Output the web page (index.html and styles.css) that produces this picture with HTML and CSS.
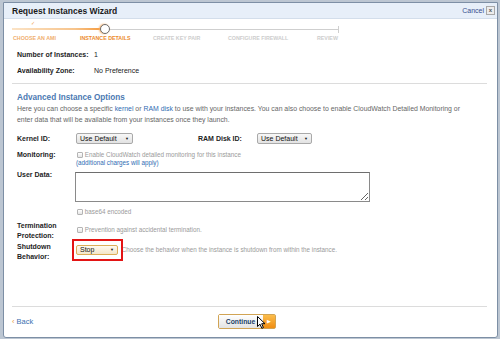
FILE: index.html
```html
<!DOCTYPE html>
<html lang="en">
<head>
    <meta charset="UTF-8">
    <title>Request Instances Wizard</title>
    <link rel="stylesheet" href="styles.css">
</head>
<body>
    <div class="dialog">
        <div class="titlebar">
            <span class="title">Request Instances Wizard</span>
            <span class="cancel">Cancel <span class="close">x</span></span>
        </div>

        <div class="steps">
            <div class="track">
                <div class="done-line"></div>
                <span class="check-mark">&#10003;</span>
                <span class="marker"></span>
                <span class="track-end"></span>
            </div>
            <div class="step-labels">
                <span class="step done">Choose an AMI</span>
                <span class="step current">Instance Details</span>
                <span class="step">Create Key Pair</span>
                <span class="step">Configure Firewall</span>
                <span class="step">Review</span>
            </div>
        </div>

        <div class="summary">
            <div class="label">Number of Instances:</div>
            <div>1</div>
            <div class="label">Availability Zone:</div>
            <div>No Preference</div>
        </div>

        <hr class="divider">

        <div class="advanced">
            <h2>Advanced Instance Options</h2>
            <p>Here you can choose a specific <a href="#">kernel</a> or <a href="#">RAM disk</a> to use with your instances. You can also choose to enable CloudWatch Detailed Monitoring or enter data that will be available from your instances once they launch.</p>

            <div class="field kernel">
                <div class="label">Kernel ID:</div>
                <div><span class="select kernel-select">Use Default <span class="arrow">&#9660;</span></span></div>
                <div class="label">RAM Disk ID:</div>
                <div><span class="select ram-select">Use Default <span class="arrow">&#9660;</span></span></div>
            </div>

            <div class="field monitoring">
                <div class="label">Monitoring:</div>
                <div class="value small">
                    <span class="box"></span> Enable CloudWatch detailed monitoring for this instance<br>
                    <a href="#">(additional charges will apply)</a>
                </div>
            </div>

            <div class="field userdata">
                <div class="label">User Data:</div>
                <div><textarea></textarea></div>
            </div>

            <div class="field base64">
                <div></div>
                <div class="value small"><span class="box"></span> base64 encoded</div>
            </div>

            <div class="field termination">
                <div class="label">Termination Protection:</div>
                <div class="value small"><span class="box"></span> Prevention against accidental termination.</div>
            </div>

            <div class="field shutdown">
                <div class="label">Shutdown Behavior:</div>
                <div class="value small">
                    <span class="highlight-wrap">
                        <span class="select stop-select">Stop <span class="arrow">&#9660;</span></span>
                        <span class="highlight"></span>
                    </span>
                    Choose the behavior when the instance is shutdown from within the instance.
                </div>
            </div>
        </div>

        <div class="footer">
            <a href="#" class="back"><span class="chev">&lsaquo;</span> Back</a>
            <span class="continue">
                <span class="continue-text">Continue</span><span class="continue-arrow">&#9654;</span>
                <svg class="cursor" width="9" height="13" viewBox="0 0 9 13">
                    <path d="M0.5 0.5 L0.5 10.5 L3 8.2 L4.8 12.3 L6.4 11.6 L4.7 7.7 L8 7.7 Z" fill="#fff" stroke="#000" stroke-width="1"/>
                </svg>
            </span>
            <span></span>
        </div>
    </div>
</body>
</html>
```

FILE: styles.css
```css
body {
    margin: 0;
    background-color: #bcc6d2;
    font-family: "Liberation Sans", Arial, sans-serif;
    font-size: 7px;
    color: #222;
}

a {
    color: #2f6cb3;
    text-decoration: none;
}

.dialog {
    margin: 2px 0 0 3px;
    width: 495px;
    height: 336px;
    box-sizing: border-box;
    border: 1px solid #7d8fa5;
    border-radius: 0 0 3px 3px;
    background-color: white;
    display: flex;
    flex-direction: column;
}

/* barra de titulo */
.titlebar {
    height: 16px;
    box-sizing: border-box;
    background-color: #e7eff9;
    border-bottom: 1px solid #d3deeb;
    display: flex;
    align-items: center;
    justify-content: space-between;
    padding: 0 2px 0 8px;
}

.title {
    font-size: 8.5px;
    font-weight: bold;
    color: #1b1b1b;
}

.cancel {
    color: #3a4e8e;
    font-size: 7px;
    display: flex;
    align-items: center;
    gap: 2px;
}

.close {
    display: inline-block;
    width: 9px;
    height: 9px;
    box-sizing: border-box;
    border: 1px solid #a8a8a8;
    background-color: #ececec;
    color: #555;
    font-size: 6px;
    font-weight: bold;
    line-height: 7px;
    text-align: center;
}

/* pasos del asistente */
.steps {
    padding: 5px 0 0 8px;
}

.track {
    position: relative;
    width: 327px;
    height: 10px;
}

.track::before {
    content: "";
    position: absolute;
    left: 0;
    right: 0;
    top: 5px;
    height: 1px;
    background-color: #cfcfcf;
}

.done-line {
    position: absolute;
    left: 0;
    top: 4px;
    width: 90px;
    height: 2px;
    background: linear-gradient(to right, #fbe3c6, #f7c48c 70%, #f59a3c);
}

.check-mark {
    position: absolute;
    left: 19px;
    top: -4px;
    font-size: 5px;
    color: #f0a050;
}

.marker {
    position: absolute;
    left: 88px;
    top: 0;
    width: 10px;
    height: 10px;
    box-sizing: border-box;
    border: 1px solid #6d6d6d;
    border-radius: 50%;
    background-color: white;
    box-shadow: -1px 0 2px #f7b06a;
}

.track-end {
    position: absolute;
    right: 0;
    top: 2px;
    width: 1px;
    height: 7px;
    background-color: #cfcfcf;
}

.step-labels {
    display: grid;
    grid-template-columns: 67px 73px 75px 89px auto;
    margin: 1px 0 0 1px;
}

.step {
    font-size: 5.3px;
    font-weight: bold;
    text-transform: uppercase;
    line-height: 6px;
    color: #cdcdcd;
    white-space: nowrap;
}

.step.done {
    color: #f0ae6e;
}

.step.current {
    color: #ec8a2c;
}

/* resumen */
.summary {
    display: grid;
    grid-template-columns: 77px 1fr;
    row-gap: 6px;
    line-height: 10px;
    margin-top: 9px;
    padding-left: 13px;
}

.label {
    font-weight: bold;
    color: #1e1e1e;
}

.divider {
    border: 0;
    border-top: 1px solid #dcdcdc;
    margin: 7px 10px 0 8px;
}

/* opciones avanzadas */
.advanced {
    padding-left: 13px;
}

.advanced h2 {
    margin: 8px 0 0;
    font-size: 8.2px;
    line-height: 11px;
    color: #4b79b2;
}

.advanced p {
    margin: 0;
    width: 452px;
    line-height: 11px;
    font-size: 6.9px;
    color: #666;
}

.field {
    display: grid;
    grid-template-columns: 59px 1fr;
}

.field .label {
    line-height: 10px;
}

.kernel {
    grid-template-columns: 59px 122px 59px auto;
    align-items: center;
    margin-top: 8px;
}

.select {
    display: inline-block;
    box-sizing: border-box;
    height: 11px;
    line-height: 9px;
    padding: 0 3px;
    border: 1px solid #a9a9a9;
    border-radius: 2px;
    background: linear-gradient(#f8f8f8, #e2e2e2);
    font-size: 7px;
    color: #111;
    white-space: nowrap;
    vertical-align: middle;
}

.select .arrow {
    float: right;
    font-size: 4px;
}

.kernel-select {
    width: 57px;
}

.ram-select {
    width: 55px;
}

.value.small {
    font-size: 6.3px;
    color: #9a9a9a;
}

.box {
    display: inline-block;
    width: 6px;
    height: 6px;
    box-sizing: border-box;
    border: 1px solid #b4b4b4;
    border-radius: 1px;
    background: linear-gradient(#fff, #e4e4e4);
    margin-left: 1px;
    vertical-align: -1px;
}

.monitoring {
    margin-top: 6px;
}

.monitoring .value {
    padding-top: 1px;
    line-height: 7.5px;
}

.userdata {
    margin-top: 4px;
}

.userdata textarea {
    display: block;
    margin: 2px 0 0 -1px;
    width: 295px;
    height: 30px;
    box-sizing: border-box;
    border: 1px solid #8a8a8a;
    border-top-color: #6e6e6e;
    padding: 0;
}

.base64 {
    margin-top: 5px;
    line-height: 10px;
}

.termination {
    margin-top: 4px;
}

.termination .value {
    padding-top: 4px;
    line-height: 10px;
}

.shutdown {
    margin-top: 1px;
}

.shutdown .value {
    padding-top: 3px;
    line-height: 10px;
}

.highlight-wrap {
    position: relative;
    display: inline-block;
    margin-right: 2px;
}

.stop-select {
    width: 42px;
    height: 10px;
    line-height: 8px;
    border-color: #dcae58;
    background: linear-gradient(#fffaf0, #f3e6c8);
}

.highlight {
    position: absolute;
    left: -4px;
    top: -6px;
    width: 51px;
    height: 22px;
    box-sizing: border-box;
    border: 2px solid #e31414;
}

/* pie */
.footer {
    margin: auto 10px 0 8px;
    border-top: 1px solid #dcdcdc;
    padding: 7px 0 8px;
    display: grid;
    grid-template-columns: 1fr auto 1fr;
    align-items: center;
}

.back {
    font-size: 7.5px;
    color: #3b70b0;
}

.chev {
    color: #e99a3c;
}

.continue {
    position: relative;
    display: flex;
    height: 15px;
    box-sizing: border-box;
    border: 1px solid #d1a454;
    border-radius: 2px;
    margin-right: 5px;
}

.continue-text {
    padding: 0 8px 0 7px;
    line-height: 13px;
    font-weight: bold;
    font-size: 6.8px;
    color: #203f68;
    background: linear-gradient(#ffffff, #e3e3e3);
}

.continue-arrow {
    width: 12px;
    line-height: 13px;
    text-align: center;
    font-size: 5px;
    color: white;
    background: linear-gradient(#fbbd4c, #f08d12);
}

.cursor {
    position: absolute;
    left: 38px;
    top: 1px;
}
```
